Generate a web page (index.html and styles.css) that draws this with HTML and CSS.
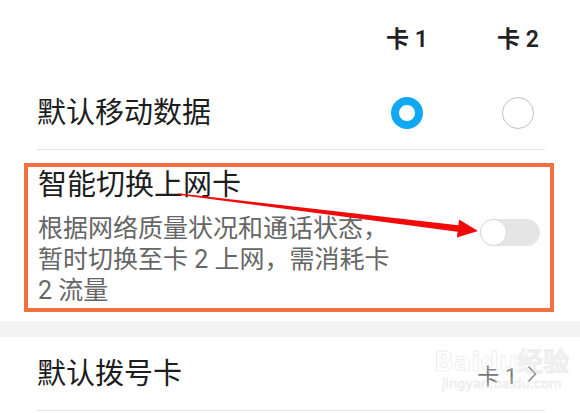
FILE: index.html
```html
<!DOCTYPE html>
<html lang="zh-CN">
<head>
  <meta charset="UTF-8">
  <title>双卡管理</title>
  <link rel="stylesheet" href="styles.css">
</head>
<body>

  <div class="screen">
    <div class="sim-block">
      <div class="sim-head">
        <span class="col">卡 1</span>
        <span class="col">卡 2</span>
      </div>
      <div class="row">
        <span class="label">默认移动数据</span>
        <span class="col"><span class="radio on"></span></span>
        <span class="col"><span class="radio"></span></span>
      </div>
    </div>

    <div class="smart">
      <div class="smart-text">
        <div class="label">智能切换上网卡</div>
        <p class="desc">根据网络质量状况和通话状态，<br>暂时切换至卡 2 上网，需消耗卡<br>2 流量</p>
      </div>
      <span class="switch"><span class="knob"></span></span>
    </div>

    <div class="band"></div>

    <div class="row dial">
      <span class="label">默认拨号卡</span>
      <span class="value">
        卡 1
        <svg width="10" height="18" viewBox="0 0 10 18"><path d="M1.5 1.5 L8.5 9 L1.5 16.5" fill="none" stroke="#8a8a8a" stroke-width="1.6"/></svg>
      </span>
    </div>

    <!-- annotation arrow -->
    <svg class="arrow" width="580" height="413" viewBox="0 0 580 413">
      <polygon fill="#f20a0a" points="178,193.2 458.4,225.3 459.1,219.4 478,231 456.9,237.6 457.6,231.7 178,194.8"/>
    </svg>

    <div class="watermark">
      <div class="wm-logo">Bai<span class="paw">du</span>经验</div>
      <div class="wm-url">jingyan.baidu.com</div>
    </div>
  </div>

</body>
</html>
```

FILE: styles.css
```css
body {
  margin: 0;
  background: #fff;
  color: #1d1d1d;
  font-family: Roboto, "Noto Sans CJK SC", sans-serif;
}
.screen {
  position: relative;
  width: 580px;
  height: 413px;
  overflow: hidden;
}
.sim-block {
  padding: 0 35px 0 37px;
}
.sim-head {
  display: flex;
  justify-content: flex-end;
  gap: 57px;
  padding: 26px 0 22px;
  font-size: 23px;
  font-weight: 600;
  line-height: 28px;
  color: #222;
}
.col {
  width: 54px;
  display: flex;
  justify-content: center;
}
.row {
  display: flex;
  align-items: center;
  gap: 57px;
  height: 73px;
  border-bottom: 1px solid #e2e2e2;
}
.label {
  flex: 1;
  font-size: 29px;
  line-height: 36px;
}
.radio {
  width: 32px;
  height: 32px;
  box-sizing: border-box;
  border-radius: 50%;
  border: 1.5px solid #c2c2c2;
}
.radio.on {
  border: 8px solid #10a8f3;
}
.smart {
  display: flex;
  align-items: flex-start;
  margin: 13px 26px 0 24px;
  padding: 0 10px;
  border: 4px solid #f3713f;
}
.smart-text {
  flex: 1;
}
.desc {
  margin: 10px 0 2px;
  font-size: 25px;
  line-height: 31px;
  color: #666;
}
.switch {
  display: flex;
  width: 60px;
  height: 27px;
  margin-top: 52px;
  border-radius: 14px;
  background: #e5e5e5;
}
.knob {
  width: 27px;
  height: 27px;
  box-sizing: border-box;
  border-radius: 50%;
  background: #fff;
  border: 1px solid #d9d9d9;
}
.band {
  height: 16px;
  margin-top: 9px;
  background: #f4f4f4;
}
.dial {
  margin: 0 35px 0 37px;
}
.value {
  display: flex;
  align-items: center;
  gap: 10px;
  margin-right: 8px;
  font-size: 22px;
  color: #777;
}
.arrow {
  position: absolute;
  left: 0;
  top: 0;
  pointer-events: none;
}
.watermark {
  position: absolute;
  left: 434px;
  top: 348px;
  color: rgba(255, 255, 255, 0.15);
  -webkit-text-stroke: 1px rgba(200, 200, 200, 0.3);
  text-align: center;
  pointer-events: none;
}
.wm-logo {
  font-family: "DejaVu Sans", sans-serif;
  font-size: 26px;
  font-weight: bold;
  line-height: 28px;
}
.wm-url {
  font-family: "DejaVu Sans", sans-serif;
  font-size: 13px;
  line-height: 16px;
}
```
